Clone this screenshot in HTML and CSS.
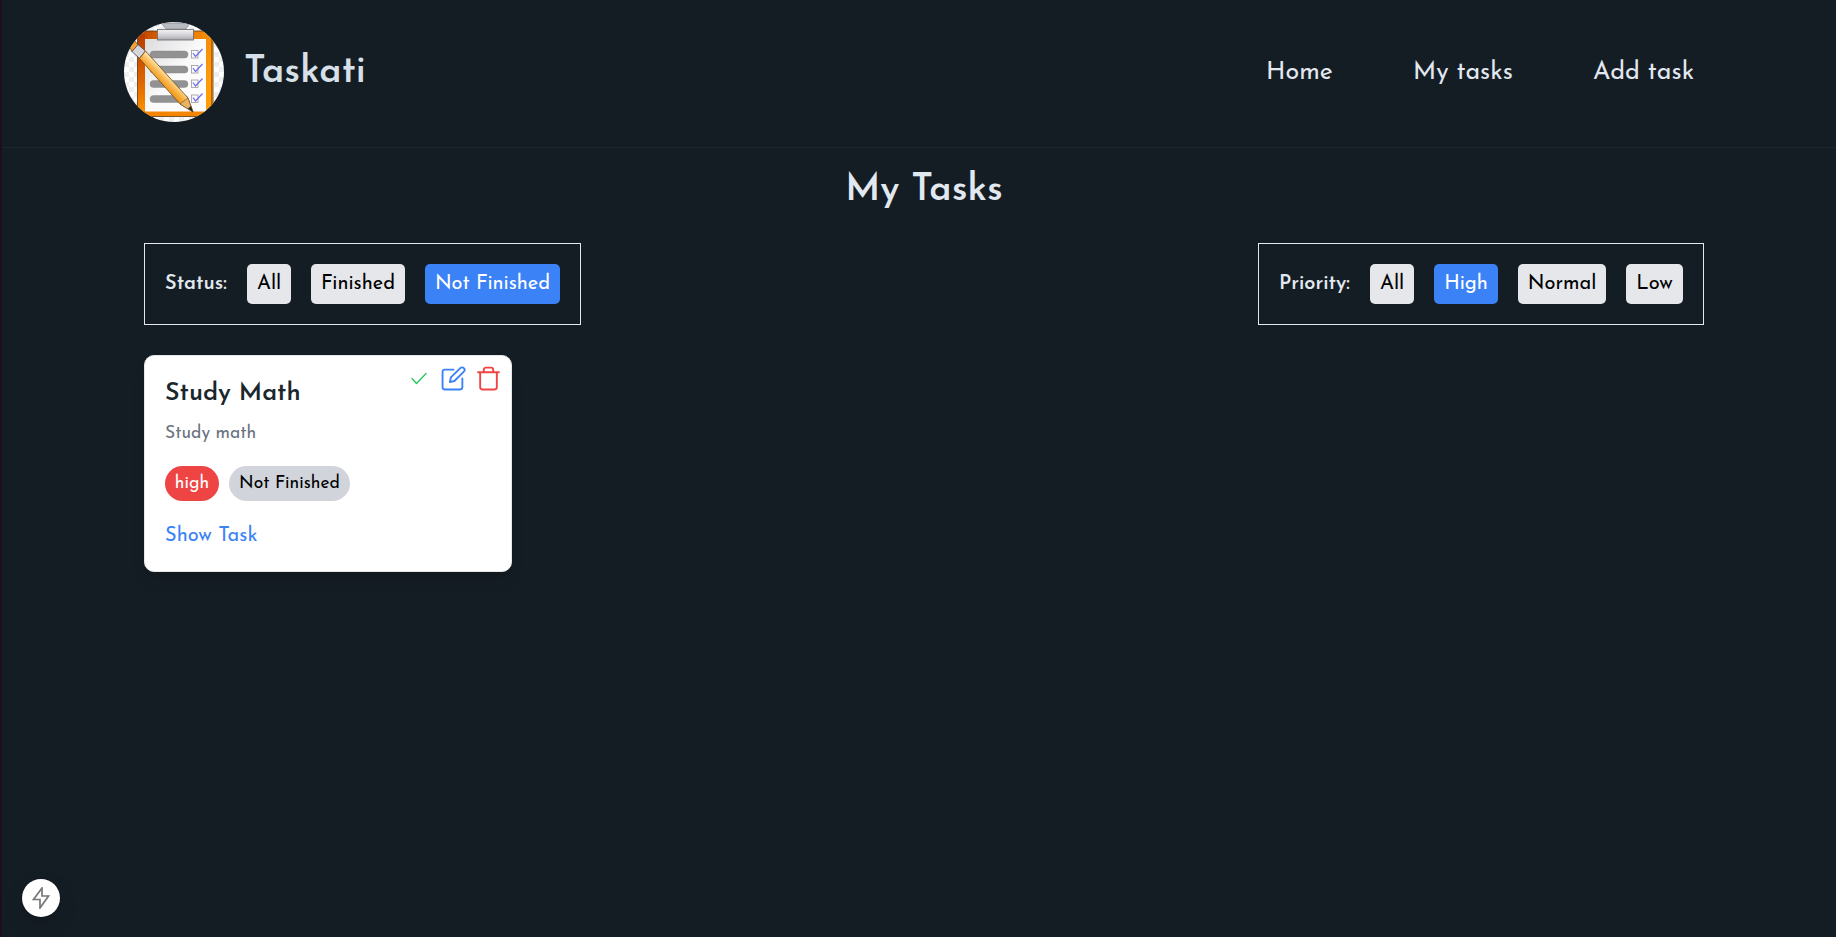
FILE: index.html
```
<!DOCTYPE html>
<html lang="en">
<head>
<meta charset="utf-8">
<title>Taskati</title>
<link rel="stylesheet" href="styles.css">
</head>
<body>
<header class="header">
  <a class="brand">
    <svg class="logo" viewBox="0 0 100 100">
      <defs>
        <clipPath id="round"><circle cx="50" cy="50" r="50"/></clipPath>
        <pattern id="checks" width="10" height="10" patternUnits="userSpaceOnUse"><rect width="10" height="10" fill="#fff"/><path d="M0 0h5v5H0zM5 5h5v5H5z" fill="#eeeeef"/></pattern>
        <linearGradient id="board" x1="0" y1="0" x2="1" y2="0.45"><stop offset="0" stop-color="#b93e00"/><stop offset=".35" stop-color="#e06a00"/><stop offset="1" stop-color="#ff9c08"/></linearGradient>
        <linearGradient id="edge" x1="0" y1="0" x2="0" y2="1"><stop offset="0" stop-color="#b83c00"/><stop offset=".55" stop-color="#dc6100"/><stop offset="1" stop-color="#ff9800"/></linearGradient>
        <linearGradient id="paper" x1="0" y1="0" x2="1" y2="1"><stop offset="0" stop-color="#dcdcdf"/><stop offset=".5" stop-color="#fafafa"/><stop offset="1" stop-color="#fff"/></linearGradient>
        <linearGradient id="metal" x1="0" y1="0" x2="0" y2="1"><stop offset="0" stop-color="#f4f4f4"/><stop offset=".5" stop-color="#d5d5d9"/><stop offset="1" stop-color="#aaaaaf"/></linearGradient>
        <linearGradient id="wood" gradientUnits="userSpaceOnUse" x1="36" y1="60" x2="43" y2="53"><stop offset="0" stop-color="#f09a1c"/><stop offset=".5" stop-color="#f8b64c"/><stop offset="1" stop-color="#ffdc9a"/></linearGradient>
        <g id="tick"><rect x="67.5" y="28.500" width="6.500" height="7.500" fill="#fafaff" stroke="#9a9a9a" stroke-width=".8"/><path d="M69 31l2.500 3.500L78.500 27" fill="none" stroke="#6a6aee" stroke-width="1.200"/></g>
      </defs>
      <g clip-path="url(#round)">
        <rect width="100" height="100" fill="url(#checks)"/>
        <rect x="13.500" y="9" width="75.500" height="85.500" rx="3" fill="url(#board)" stroke="#5c3a12" stroke-width=".8"/>
        <path d="M14 12h7v77l-7 5z" fill="url(#edge)"/>
        <path d="M14 94l7-5h62l6 5z" fill="#f58400"/>
        <path d="M21 17h61v72.500H21z" fill="url(#paper)"/>
        <path d="M87.500 12v80" stroke="#c25e00" stroke-width="1"/>
        <path d="M37 1h29l-4 6H42z" fill="#b9bcc1" stroke="#777" stroke-width=".6"/>
        <rect x="33.500" y="7.500" width="36" height="10.500" fill="url(#metal)" stroke="#67676a" stroke-width=".8"/>
        <g fill="#929292" stroke="#818181" stroke-width=".4"><rect x="26" y="29" width="38" height="7" rx="3.500"/><rect x="26" y="44" width="38" height="7" rx="3.500"/><rect x="26" y="58.500" width="38" height="7" rx="3.500"/><rect x="26" y="73.500" width="38" height="7" rx="3.500"/></g>
        <use href="#tick"/><use href="#tick" y="15"/><use href="#tick" y="29.500"/><use href="#tick" y="44.500"/>
        <path d="M6 25l5-6 3 4-6 7z" fill="#f2a338" stroke="#6b4a20" stroke-width=".7"/>
        <path d="M8 29.500l6-7 7.500 6.500-6 7.500z" fill="#d5d5da" stroke="#444" stroke-width=".8"/>
        <path d="M15.500 36.500l6-7.500 42.500 47 5 14-13-8z" fill="url(#wood)" stroke="#6b4a20" stroke-width=".8"/>
        <path d="M56 82l8-6L69 90z" fill="#e7b365" stroke="#6b4a20" stroke-width=".6"/>
        <path d="M64 86.500l3-2.500L69 90z" fill="#262626"/>
      </g>
    </svg>
    <span class="brand-name">Taskati</span>
  </a>
  <nav class="nav">
    <a class="nav-home">Home</a>
    <a class="nav-tasks">My tasks</a>
    <a class="nav-add">Add task</a>
  </nav>
</header>
<main class="main">
  <h1 class="title">My Tasks</h1>
  <div class="filters">
    <div class="filter status">
      <span class="label">Status:</span>
      <button class="btn all">All</button>
      <button class="btn finished">Finished</button>
      <button class="btn unfinished active">Not Finished</button>
    </div>
    <div class="filter priority">
      <span class="label">Priority:</span>
      <button class="btn all">All</button>
      <button class="btn high active">High</button>
      <button class="btn normal">Normal</button>
      <button class="btn low">Low</button>
    </div>
  </div>
  <article class="card">
    <div class="actions">
      <svg class="check" viewBox="0 0 24 24"><path d="M5 11.500l4.500 5L19 6.500"/></svg>
      <svg class="edit" viewBox="0 0 24 24"><path d="M12 3.500H3.500a2 2 0 0 0-2 2v15a2 2 0 0 0 2 2h15a2 2 0 0 0 2-2V12M8.500 15.500l1-4.500 9-9a2.350 2.350 0 0 1 3.400 3.400l-9 9z"/></svg>
      <svg class="trash" viewBox="0 0 24 24"><path d="M2 6h20M4 6v14.500a2 2 0 0 0 2 2h12a2 2 0 0 0 2-2V6M7.500 6V3.500a2 2 0 0 1 2-2h5a2 2 0 0 1 2 2V6"/></svg>
    </div>
    <h2 class="card-title">Study Math</h2>
    <p class="card-text">Study math</p>
    <div class="badges">
      <span class="badge badge-high">high</span>
      <span class="badge badge-state">Not Finished</span>
    </div>
    <a class="show">Show Task</a>
  </article>
</main>
<div class="indicator">
  <svg viewBox="0 0 20 22"><path d="M11 1L2.500 12.500H9V21L17.500 9H11z"/></svg>
</div>
</body>
</html>
```
FILE: styles.css
```
* { box-sizing: border-box; }
body {
  margin: 0;
  height: 937px;
  overflow: hidden;
  background: #151d24;
  border-left: 2px solid #1d1119;
  color: #e2e8f0;
  font-family: "Josefin Sans", Lato, sans-serif;
}
h1, h2, p { margin: 0; }
.header {
  height: 148px;
  padding: 22px 142px 0 122px;
  display: flex;
  justify-content: space-between;
  align-items: flex-start;
  border-bottom: 1px solid #1c262e;
}
.brand { display: flex; align-items: flex-start; gap: 20px; }
.logo { width: 100px; height: 100px; display: block; }
.brand-name { font-size: 37.5px; line-height: 48px; margin-top: 27px; font-weight: 600; color: #d7e0e8; }
.nav { display: flex; font-size: 25px; line-height: 32px; margin-top: 35px; white-space: nowrap; }
.nav-home { width: 147px; }
.nav-tasks { width: 180px; }
.nav-add { width: 101px; }
.main { padding: 0 132px 0 142px; }
.title { height: 95px; padding-top: 17px; text-align: center; font-size: 37.5px; line-height: 52px; font-weight: 600; }
.filters { display: flex; justify-content: space-between; }
.filter { display: flex; align-items: center; gap: 20px; height: 82px; padding: 0 20px; border: 1px solid #e5e7eb; }
.status { width: 437px; }
.priority { width: 446px; }
.label { width: 62px; font-size: 20px; line-height: 24px; font-weight: 600; white-space: nowrap; }
.priority .label { width: 71px; }
.btn {
  height: 40px;
  padding: 0;
  border: 0;
  border-radius: 5px;
  background: #e5e7eb;
  color: #000;
  font: 20px/24px "Josefin Sans", Lato, sans-serif;
  white-space: nowrap;
}
.btn.active { background: #3b82f6; color: #fff; }
.all { width: 44px; }
.finished { width: 94px; }
.unfinished { width: 135px; }
.high { width: 64px; }
.normal { width: 88px; }
.low { width: 57px; }
.card {
  position: relative;
  width: 368px;
  height: 217px;
  margin-top: 30px;
  padding: 20px;
  border: 1px solid #e5e7eb;
  border-radius: 10px;
  background: #fff;
  box-shadow: 0 10px 15px -3px #0000001a, 0 4px 6px -4px #0000001a;
}
.actions { position: absolute; top: 10px; right: 10px; display: flex; align-items: center; gap: 10px; }
.actions svg { width: 25px; height: 25px; fill: none; stroke-linecap: round; stroke-linejoin: round; }
.actions .check { width: 24px; height: 24px; stroke: #22c55e; stroke-width: 1.3; }
.edit { stroke: #3b82f6; stroke-width: 1.8; }
.trash { stroke: #ef4444; stroke-width: 1.8; }
.card-title { font-size: 25px; line-height: 32px; padding-top: 2px; font-weight: 600; color: #1b262d; }
.card-text { margin-top: 12px; font-size: 17.5px; line-height: 24px; color: #6b7280; }
.badges { display: flex; gap: 10px; margin-top: 20px; }
.badge { height: 35px; padding-bottom: 1px; border-radius: 18px; display: flex; align-items: center; justify-content: center; font-size: 17.5px; }
.badge-high { width: 54px; background: #ef4444; color: #fff; }
.badge-state { width: 121px; background: #d1d5db; color: #000; }
.show { display: block; margin-top: 21px; font-size: 20px; line-height: 28px; color: #3b82f6; }
.indicator {
  position: absolute;
  left: 22px;
  top: 879px;
  width: 38px;
  height: 38px;
  border-radius: 50%;
  background: #fff;
  display: flex;
  align-items: center;
  justify-content: center;
  box-shadow: 0 0 0 1px #0002, 0 8px 20px #0002;
}
.indicator svg { width: 20px; height: 22px; fill: none; stroke: #777; stroke-width: 1.7; }
```
